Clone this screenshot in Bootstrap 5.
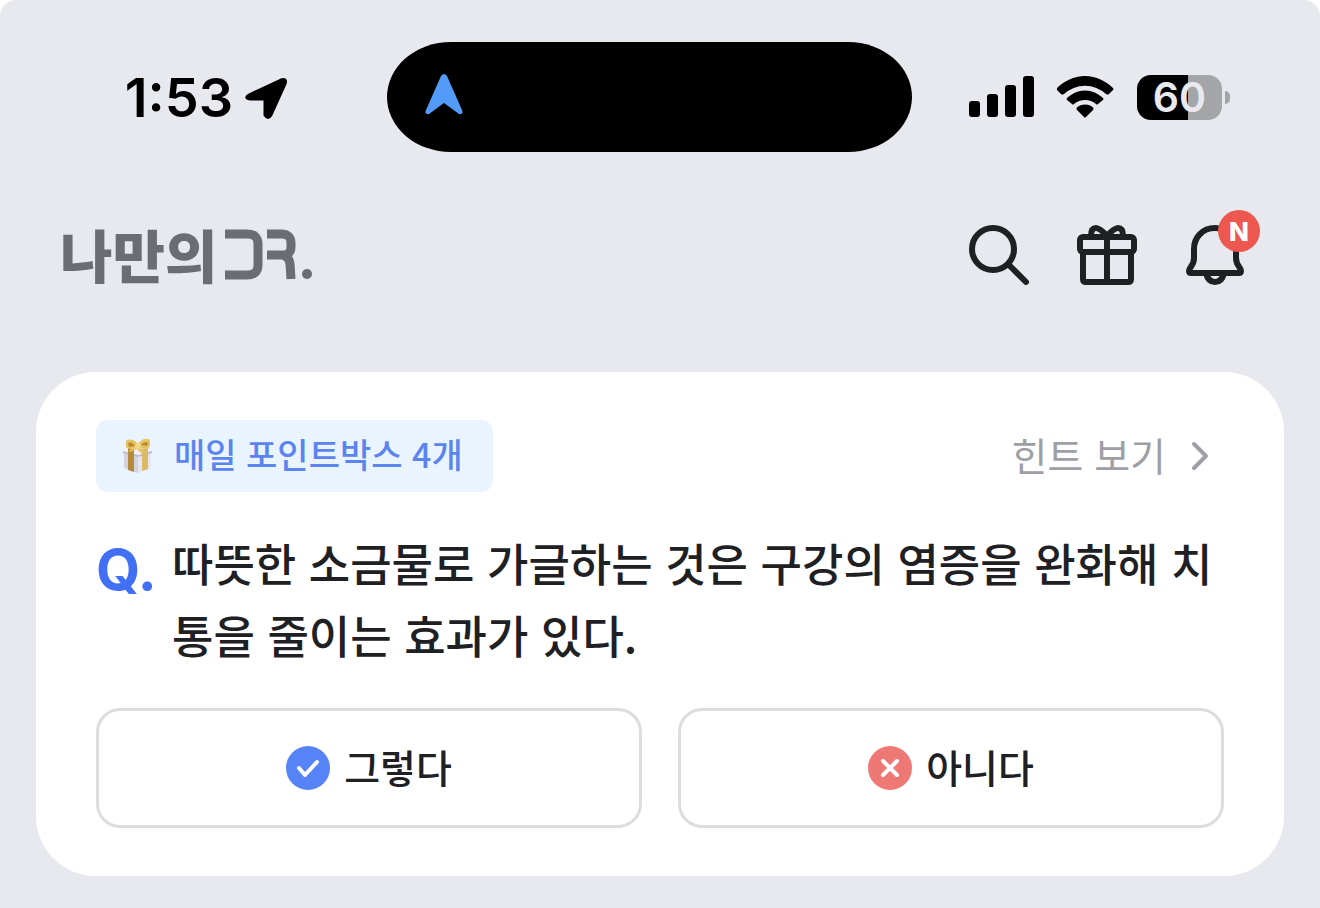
<!DOCTYPE html>
<html lang="ko">
<head>
<meta charset="utf-8">
<meta name="viewport" content="width=device-width, initial-scale=1">
<title>나만의 DR.</title>
<link href="https://cdn.jsdelivr.net/npm/bootstrap@5.3.0/dist/css/bootstrap.min.css" rel="stylesheet">
<style>
  body { font-family: "Noto Sans CJK KR", "Noto Sans", sans-serif; color: #1e2024; background: #fff; }
  svg { display: block; flex: none; }
  .app-screen { background: #e8e9ee; min-height: 100vh; border-radius: 16px 16px 0 0; padding: 42px 0 32px; }
  .status-bar { display: grid; grid-template-columns: 387fr 525fr 408fr; align-items: center; color: #000; font-family: Inter, sans-serif; }
  .status-time { padding: 2px 99px 0 0; gap: 12px; font-size: 54px; line-height: 64px; font-weight: 600; }
  .island { height: 110px; background: #000; border-radius: 64px / 55px; padding: 0 0 4px 37px; }
  .status-icons { padding-left: 57px; gap: 22px; }
  .battery { width: 85px; height: 45px; border-radius: 14px; background: linear-gradient(90deg, #000 60%, #a3a5a8 60%); color: #e8e9ee; font-size: 41px; line-height: 45px; font-weight: 600; }
  .battery-cap { width: 5px; height: 13px; border-radius: 0 5px 5px 0; background: #a3a5a8; margin-left: 3px; }
  .app-header { padding: 67px 69px 0 60px; }
  .brand { color: #6b6d73; font-size: 57px; line-height: 68px; font-weight: 900; gap: 8px; }
  .brand:hover { color: #6b6d73; }
  .header-icons { gap: 36px; }
  .icon-btn { width: 72px; height: 72px; color: #1e2024; }
  .new-badge { top: -9px; right: -9px; width: 42px; height: 42px; background: #ec5850; font: 800 26px Inter, sans-serif; }
  .quiz-card { margin: 81px 36px 0; padding: 48px 60px; border-radius: 60px; }
  .point-tag { height: 72px; border-radius: 12px; background: #eaf4ff; color: #5b84ee; padding: 0 30px 0 22px; gap: 16px; font-size: 34px; line-height: 48px; font-weight: 500; }
  .hint-link { color: #9e9fa5; font-size: 39px; line-height: 56px; gap: 24px; padding-right: 14px; }
  .question { margin-top: 35px; }
  .question-mark { flex: 0 0 76px; color: #4270f5; font: 700 57px/86px Inter, sans-serif; }
  .question-text { font-size: 45px; line-height: 72px; font-weight: 500; word-break: break-all; margin-right: -8px; }
  .answers { margin-top: 37px; gap: 36px; }
  .answer-btn { height: 120px; border: 3px solid #dcdde0; border-radius: 24px; background: #fff; color: #1e2024; font-size: 39px; line-height: 56px; font-weight: 500; gap: 14px; }
</style>
</head>
<body>
<main class="app-screen">
  <div class="status-bar">
    <div class="status-time d-flex align-items-center justify-content-end">
      <span>1:53</span>
      <svg width="43" height="43" viewBox="0 0 43 43" aria-hidden="true"><path d="M4 18 36 3Q42 1 40 7L26 38Q23 43 20 38V22H5Q-1 21 4 18Z" stroke="#000" stroke-width="3" stroke-linejoin="round"/></svg>
    </div>
    <div class="island d-flex align-items-center">
      <svg width="40" height="44" viewBox="0 0 40 44" aria-hidden="true"><path d="M17 3Q20-1 23 3L38 37Q40 42 35 41L20 30 5 41Q0 42 2 37Z" fill="#539bf8"/></svg>
    </div>
    <div class="status-icons d-flex align-items-center">
      <svg width="66" height="42" viewBox="0 0 66 42" aria-hidden="true"><rect y="25" width="11" height="16" rx="3"/><rect x="18" y="18" width="11" height="23" rx="3"/><rect x="36" y="9" width="11" height="32" rx="3"/><rect x="54" width="11" height="41" rx="3"/></svg>
      <svg width="58" height="42" viewBox="0 0 58 42" aria-hidden="true"><path d="M28 0C39 0 49 5 56 12Q57 13 56 14L52 18Q51 19 49 18A31 31 0 0 0 7 18Q5 19 4 18L0 14Q-1 13 0 12C7 5 17 0 28 0Z"/><path d="M28 14.500C35 14.500 41 17.500 46 22Q47 23 46 24L41 28Q40 29 39 28A17 17 0 0 0 17 28Q16 29 15 28L10 24Q9 23 10 22C15 17.500 21 14.500 28 14.500Z"/><path d="M28 28.500Q33 28.500 36 31.500 37 33 36 34L29 41Q28 42 27 41L20 34Q19 33 20 31.500 23 28.500 28 28.500Z"/></svg>
      <div class="d-flex align-items-center">
        <div class="battery text-center">60</div>
        <div class="battery-cap"></div>
      </div>
    </div>
  </div>

  <header class="app-header d-flex align-items-center justify-content-between">
    <a href="#" class="brand d-flex align-items-center text-decoration-none" aria-label="나만의 DR.">
      <span class="pb-1">나만의</span>
      <svg width="88" height="56" viewBox="0 0 88 56" fill="none" stroke="#6b6d73" stroke-width="9" aria-hidden="true"><path d="M0 7H22Q33 7 33 17V38Q33 48 22 48H0"/><path d="M42 7H56Q66 7 66 16V20Q66 28 57 28H42M57 28Q64 29 65 37L66 52"/><circle cx="82" cy="47" r="5" fill="#6b6d73" stroke="none"/></svg>
    </a>
    <nav class="header-icons d-flex" aria-label="메뉴">
      <button type="button" class="icon-btn btn p-0 border-0" aria-label="검색"><svg width="72" height="72" viewBox="0 0 72 72" fill="none" stroke="currentColor" stroke-width="6" stroke-linecap="round"><circle cx="30" cy="30" r="21"/><path d="M46 46 63 63"/></svg></button>
      <button type="button" class="icon-btn btn p-0 border-0" aria-label="선물"><svg width="72" height="72" viewBox="0 0 72 72" fill="none" stroke="currentColor" stroke-width="6" stroke-linejoin="round"><rect x="9" y="18" width="54" height="15" rx="3"/><path d="M12 33V60Q12 63 15 63H57Q60 63 60 60V33M36 18V63M37 18Q29 9 25 9 20 9 20 17M35 18Q43 9 47 9 52 9 52 17"/></svg></button>
      <button type="button" class="icon-btn btn p-0 border-0 position-relative" aria-label="알림"><svg width="72" height="72" viewBox="0 0 72 72" fill="none" stroke="currentColor" stroke-width="6" stroke-linejoin="round"><path d="M36 9C23 9 15 19 15 30V39C15 47 10 48 10 52Q10 54 12 54H60Q62 54 62 52C62 48 57 47 57 39V30C57 19 49 9 36 9Z"/><path d="M27 54Q29 63 36 63T45 54"/></svg><span class="new-badge position-absolute rounded-circle text-white d-flex align-items-center justify-content-center">N</span></button>
    </nav>
  </header>

  <section class="quiz-card bg-white">
    <div class="d-flex align-items-center justify-content-between">
      <div class="point-tag d-flex align-items-center">
        <svg width="40" height="40" viewBox="0 0 40 40" aria-hidden="true"><path d="M6 14 20 17V37L8 33Q6 32 6 30Z" fill="#d3d2e0"/><path d="M20 17 33 14V30Q33 32 31 33L20 37Z" fill="#e6e4ef"/><path d="M5 12 20 9 34 12V16L20 20 5 16Z" fill="#f3f1f5"/><path d="M5 15 20 19 34 15V17L20 21 5 17Z" fill="#bfbdcd"/><path d="M10 12 16 13V36L10 34Z" fill="#b58a39"/><path d="M24 13 30 12V33L24 35Z" fill="#dcb965"/><path d="M19 12Q7 14 8 10L8 5Q14 1 20 8 26 0 32 4L32 10Q30 14 21 12L28 15 23 17 19 13 12 16 11 14Z" fill="#e7c263"/><path d="M10 7Q14 5 17 10L11 11ZM23 9Q27 4 30 7L29 10Z" fill="#b88c2e"/><circle cx="20" cy="10" r="3" fill="#f3d78b"/></svg>
        <span class="pb-1">매일 포인트박스 4개</span>
      </div>
      <a href="#" class="hint-link d-flex align-items-center text-decoration-none"><span class="pb-1">힌트 보기</span>
        <svg width="20" height="30" viewBox="0 0 20 30" fill="none" stroke="currentColor" stroke-width="4" stroke-linecap="round" stroke-linejoin="round" aria-hidden="true"><path d="M4 3 16 15 4 27"/></svg></a>
    </div>
    <div class="question d-flex align-items-start">
      <span class="question-mark">Q.</span>
      <p class="question-text mb-0">따뜻한 소금물로 가글하는 것은 구강의 염증을 완화해 치통을 줄이는 효과가 있다.</p>
    </div>
    <div class="answers d-flex">
      <button type="button" class="answer-btn btn flex-fill w-50 d-flex align-items-center justify-content-center"><svg width="44" height="44" viewBox="0 0 44 44" fill="none" stroke="#fff" stroke-width="4" stroke-linecap="round" stroke-linejoin="round" aria-hidden="true"><circle cx="22" cy="22" r="22" fill="#5683f5" stroke="none"/><path d="M13 22 19 29 31 16"/></svg><span class="pb-1">그렇다</span></button>
      <button type="button" class="answer-btn btn flex-fill w-50 d-flex align-items-center justify-content-center"><svg width="44" height="44" viewBox="0 0 44 44" fill="none" stroke="#fff" stroke-width="4" stroke-linecap="round" aria-hidden="true"><circle cx="22" cy="22" r="22" fill="#ee7974" stroke="none"/><path d="M15 15 29 29M29 15 15 29"/></svg><span class="pb-1">아니다</span></button>
    </div>
  </section>
</main>
<script src="https://cdn.jsdelivr.net/npm/bootstrap@5.3.0/dist/js/bootstrap.bundle.min.js"></script>
</body>
</html>
